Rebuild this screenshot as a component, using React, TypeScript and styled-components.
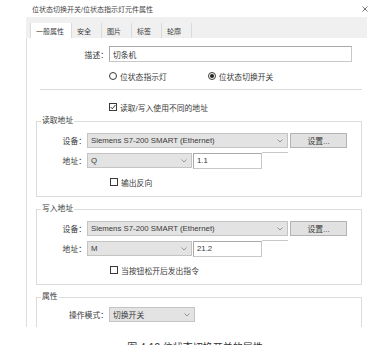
import styled, { createGlobalStyle } from "styled-components";
import { FC } from "react";

const GlobalStyle = createGlobalStyle`
    body {
        margin: 0;
        background: #fff;
    }
    * {
        box-sizing: border-box;
    }
`;

const Page = styled.div`
    width: 390px;
    height: 345px;
    overflow: hidden;
    background: #fff;
    display: flex;
    flex-direction: column;
    font-family: "Liberation Sans", "Noto Sans CJK SC", sans-serif;
    font-size: 7.8px;
    color: #3a3a3a;
`;

const TitleBar = styled.div`
    height: 17px;
    flex-shrink: 0;
    display: flex;
    align-items: center;
    justify-content: space-between;
    padding: 0 22px 0 32px;
    font-size: 7px;
    color: #444;
`;

const Dialog = styled.div`
    margin-left: 26px;
    width: 341px;
    display: flex;
    flex-direction: column;
    flex-shrink: 0;
`;

const TabStrip = styled.div`
    height: 21px;
    display: flex;
    align-items: flex-end;
    padding-left: 4px;
    background: #f0f0f0;
`;

const Tab = styled.div<{ $active?: boolean }>`
    height: 15px;
    display: flex;
    align-items: center;
    padding: 0 ${(p) => (p.$active ? 7 : 10)}px 0 5px;
    font-size: 7px;
    background: ${(p) => (p.$active ? "#fff" : "transparent")};
    border-left: ${(p) => (p.$active ? "1px solid #dadada" : "none")};
    border-right: 1px solid #dadada;
`;

const Panel = styled.div`
    height: 289px;
    overflow: hidden;
    border-left: 1px solid #dedede;
    padding: 8px 5px 0 9px;
    display: flex;
    flex-direction: column;
    background: #fff;
`;

const Row = styled.div<{ $mt?: number; $h?: number }>`
    display: flex;
    align-items: center;
    height: ${(p) => p.$h ?? 15}px;
    margin-top: ${(p) => p.$mt ?? 0}px;
    flex-shrink: 0;
`;

const OptionRow = styled.div<{ $mt?: number; $gap?: number }>`
    display: flex;
    align-items: center;
    height: 12px;
    padding-left: 73px;
    gap: ${(p) => p.$gap ?? 0}px;
    margin-top: ${(p) => p.$mt ?? 0}px;
    flex-shrink: 0;
`;

const FieldLabel = styled.span<{ $w: number }>`
    width: ${(p) => p.$w}px;
    flex-shrink: 0;
    text-align: right;
    margin-right: 1px;
    white-space: nowrap;
`;

const TextBox = styled.div<{ $w: number; $ml?: number }>`
    width: ${(p) => p.$w}px;
    height: 16px;
    flex-shrink: 0;
    margin-left: ${(p) => p.$ml ?? 0}px;
    display: flex;
    align-items: center;
    padding-left: 3px;
    background: #fff;
    border: 1px solid #a9a9a9;
    border-right-color: #c8c8c8;
    border-bottom-color: #c8c8c8;
`;

const Ghost = styled.span<{ $w: number }>`
    width: ${(p) => p.$w}px;
    align-self: flex-start;
    margin-top: -1px;
    border-top: 1px solid #c9c9c9;
`;

const Combo = styled.div<{ $w: number }>`
    width: ${(p) => p.$w}px;
    height: 15px;
    flex-shrink: 0;
    display: flex;
    align-items: center;
    justify-content: space-between;
    padding: 0 4px 0 3px;
    background: #e3e3e3;
    border: 1px solid #c4c4c4;
    white-space: nowrap;
`;

const Button = styled.div`
    width: 57px;
    height: 15px;
    margin-left: 2px;
    display: flex;
    align-items: center;
    justify-content: center;
    background: #e1e1e1;
    border: 1px solid #b4b4b4;
`;

const Option = styled.span`
    display: inline-flex;
    align-items: center;
    gap: 3px;
    white-space: nowrap;
`;

const RadioMark = styled.span<{ $checked?: boolean }>`
    width: 8px;
    height: 8px;
    border: 1px solid #3a3a3a;
    border-radius: 50%;
    display: inline-flex;
    align-items: center;
    justify-content: center;
    &::after {
        content: "";
        width: 4px;
        height: 4px;
        border-radius: 50%;
        background: ${(p) => (p.$checked ? "#222" : "transparent")};
    }
`;

const CheckMark = styled.span`
    width: 8px;
    height: 8px;
    border: 1px solid #3a3a3a;
    display: inline-flex;
    align-items: center;
    justify-content: center;
    background: #fff;
`;

const Separator = styled.div`
    height: 1px;
    width: 322px;
    margin: 7px 0 0 4px;
    background: #d9d9d9;
    flex-shrink: 0;
`;

const Group = styled.fieldset<{ $mt: number; $pt: number }>`
    margin: ${(p) => p.$mt}px 0 0 0;
    padding: ${(p) => p.$pt}px 0 8px 0;
    min-width: 0;
    width: 326px;
    border: 1px solid #dcdcdc;
    flex-shrink: 0;
`;

const Legend = styled.legend`
    margin-left: 4px;
    padding: 0 1px;
    line-height: 10px;
    height: 10px;
`;

const Caption = styled.div`
    margin-top: 15px;
    text-align: center;
    font-size: 10px;
    line-height: 12px;
    color: #333;
    flex-shrink: 0;
`;

const Chevron: FC = () => (
    <svg width="6" height="4" viewBox="0 0 6 4">
        <polyline points="0.5,0.5 3,3 5.5,0.5" fill="none" stroke="#8c8c8c" strokeWidth="0.9" />
    </svg>
);

const CloseIcon: FC = () => (
    <svg width="6" height="6" viewBox="0 0 6 6">
        <path d="M0.5 0.5 L5.5 5.5 M5.5 0.5 L0.5 5.5" stroke="#555" strokeWidth="0.8" />
    </svg>
);

const Radio: FC<{ checked?: boolean; label: string }> = ({ checked, label }) => (
    <Option>
        <RadioMark $checked={checked} />
        {label}
    </Option>
);

const Check: FC<{ checked?: boolean; label: string }> = ({ checked, label }) => (
    <Option>
        <CheckMark>
            {checked && (
                <svg width="6" height="6" viewBox="0 0 6 6">
                    <polyline points="0.6,3 2.3,4.8 5.4,1" fill="none" stroke="#222" strokeWidth="0.9" />
                </svg>
            )}
        </CheckMark>
        {label}
    </Option>
);

const Select: FC<{ w: number; value: string }> = ({ w, value }) => (
    <Combo $w={w}>
        <span>{value}</span>
        <Chevron />
    </Combo>
);

const AddressGroup: FC<{ title: string; address: string; offset: string; option: string; mt: number }> = ({
    title,
    address,
    offset,
    option,
    mt,
}) => (
    <Group $mt={mt} $pt={7}>
        <Legend>{title}</Legend>
        <Row>
            <FieldLabel $w={49}>设备：</FieldLabel>
            <Select w={201} value="Siemens S7-200 SMART (Ethernet)" />
            <Button>设置...</Button>
        </Row>
        <Row $mt={5}>
            <FieldLabel $w={49}>地址：</FieldLabel>
            <Select w={105} value={address} />
            <TextBox $w={69} $ml={1}>{offset}</TextBox>
            <Ghost $w={26} />
        </Row>
        <OptionRow $mt={8}>
            <Check label={option} />
        </OptionRow>
    </Group>
);

const tabs = ["一般属性", "安全", "图片", "标签", "轮廓"];

const App: FC = () => {
    return (
        <Page>
            <GlobalStyle />
            <TitleBar>
                <span>位状态切换开关/位状态指示灯元件属性</span>
                <CloseIcon />
            </TitleBar>
            <Dialog>
                <TabStrip>
                    {tabs.map((t, i) => (
                        <Tab key={t} $active={i === 0}>
                            {t}
                        </Tab>
                    ))}
                </TabStrip>
                <Panel>
                    <Row $h={16}>
                        <FieldLabel $w={72}>描述：</FieldLabel>
                        <TextBox $w={243}>切条机</TextBox>
                    </Row>
                    <OptionRow $mt={8} $gap={41}>
                        <Radio label="位状态指示灯" />
                        <Radio checked label="位状态切换开关" />
                    </OptionRow>
                    <Separator />
                    <OptionRow $mt={11}>
                        <Check checked label="读取/写入使用不同的地址" />
                    </OptionRow>
                    <AddressGroup title="读取地址" address="Q" offset="1.1" option="输出反向" mt={3} />
                    <AddressGroup title="写入地址" address="M" offset="21.2" option="当按钮松开后发出指令" mt={7} />
                    <Group $mt={7} $pt={5}>
                        <Legend>属性</Legend>
                        <Row>
                            <FieldLabel $w={71}>操作模式：</FieldLabel>
                            <Select w={86} value="切换开关" />
                        </Row>
                    </Group>
                </Panel>
            </Dialog>
            <Caption>图 4-12 位状态切换开关的属性</Caption>
        </Page>
    );
};

export default App;
